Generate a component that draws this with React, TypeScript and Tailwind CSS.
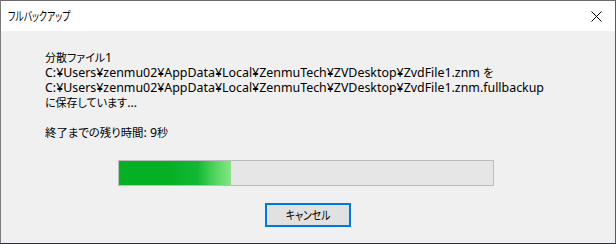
import React from "react";

function J({ children }: { children: React.ReactNode }) {
  return <span className="text-[11px] [font-feature-settings:'palt']">{children}</span>;
}

export default function App() {
  return (
    <div className="w-[616px] h-[244px] box-border border-l border-t border-r border-b border-l-[#7a7a7a] border-t-[#6a6a6a] border-r-[#5a5a5a] border-b-[#2b2d3f] bg-[#f0f0f0] flex flex-col text-[12.4px] text-black overflow-hidden font-['Noto_Sans','Noto_Sans_CJK_JP',sans-serif]">
      <div className="h-[30px] bg-white flex items-center justify-between pl-[7px] pr-[13px] shrink-0">
        <span className="inline-block origin-left scale-x-[0.71] text-[12.5px] leading-none [font-feature-settings:'palt'] font-['Noto_Sans_CJK_JP',sans-serif]">フルバックアップ</span>
        <svg width="11" height="11" viewBox="0 0 11 11">
          <path d="M0.5 0.5 L10.5 10.5 M10.5 0.5 L0.5 10.5" stroke="#000" strokeWidth="1" />
        </svg>
      </div>
      <div className="flex flex-col pt-[19px] pl-[44px]">
        <div className="leading-[15px] whitespace-nowrap">
          <div><J>分散ファイル</J>1</div>
          <div>C:¥Users¥zenmu02¥AppData¥Local¥ZenmuTech¥ZVDesktop¥ZvdFile1.znm <J>を</J></div>
          <div>C:¥Users¥zenmu02¥AppData¥Local¥ZenmuTech¥ZVDesktop¥ZvdFile1.znm.fullbackup</div>
          <div><J>に保存しています</J>...</div>
          <div>&nbsp;</div>
          <div><span className="text-[11.4px] [font-feature-settings:'palt']">終了までの残り時間</span>: 9<J>秒</J></div>
        </div>
        <div className="mt-[20px] ml-[73px] w-[376px] h-[26px] border border-[#bcbcbc] bg-[#e6e6e6] flex">
          <div className="w-[112px] h-full bg-[linear-gradient(to_right,#06b025_0%,#06b025_45%,#12b835_70%,#5ad865_88%,#86e486_100%)]" />
        </div>
        <div className="mt-[17px] ml-[220px] w-[86px] h-[24px] border-2 border-[#0078d7] bg-[#e1e1e1] flex items-center justify-center">
          <span className="inline-block scale-x-[0.82] text-[12px] leading-none [font-feature-settings:'palt'] font-['Noto_Sans_CJK_JP',sans-serif]">キャンセル</span>
        </div>
      </div>
    </div>
  );
}
